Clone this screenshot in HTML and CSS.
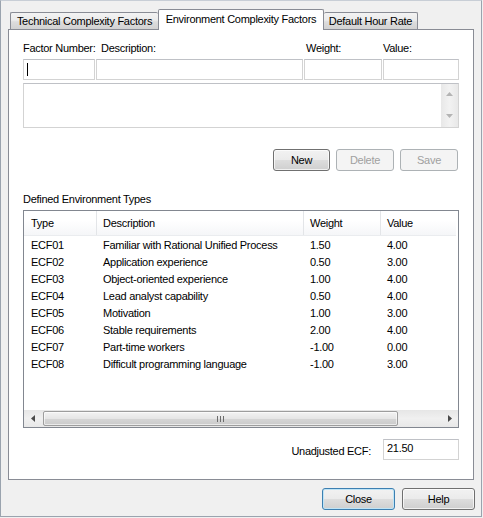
FILE: index.html
```html
<!DOCTYPE html>
<html lang="en">
<head>
    <meta charset="UTF-8">
    <title>Environment Complexity Factors</title>
    <link rel="stylesheet" href="styles.css">
</head>
<body>
    <div class="dialog">
        <!-- 选项卡 -->
        <div class="tabs">
            <div class="tab tab-first">Technical Complexity Factors</div>
            <div class="tab active">Environment Complexity Factors</div>
            <div class="tab tab-last">Default Hour Rate</div>
        </div>

        <div class="panel">
            <!-- 输入区域 -->
            <div class="factor-form">
                <div class="lbl">Factor Number:</div>
                <div class="lbl lbl-desc">Description:</div>
                <div class="lbl lbl-weight">Weight:</div>
                <div class="lbl">Value:</div>
                <div class="field"><span class="caret"></span></div>
                <div class="field"></div>
                <div class="field"></div>
                <div class="field"></div>
            </div>

            <div class="memo">
                <div class="vscroll">
                    <svg width="7" height="4" viewBox="0 0 7 4"><path d="M3.5 0 L7 4 L0 4 Z" fill="#b4b4b4"/></svg>
                    <svg width="7" height="4" viewBox="0 0 7 4"><path d="M0 0 L7 0 L3.5 4 Z" fill="#b4b4b4"/></svg>
                </div>
            </div>

            <div class="actions">
                <button class="btn btn-new">New</button>
                <button class="btn btn-small" disabled>Delete</button>
                <button class="btn btn-small" disabled>Save</button>
            </div>

            <div class="section-title">Defined Environment Types</div>

            <!-- 列表 -->
            <div class="listview">
                <div class="lv-head">
                    <div class="col c-type">Type</div>
                    <div class="col c-desc">Description</div>
                    <div class="col c-weight">Weight</div>
                    <div class="col c-value">Value</div>
                </div>
                <div class="lv-body">
                    <div class="row"><div class="col c-type">ECF01</div><div class="col c-desc">Familiar with Rational Unified Process</div><div class="col c-weight">1.50</div><div class="col c-value">4.00</div></div>
                    <div class="row"><div class="col c-type">ECF02</div><div class="col c-desc">Application experience</div><div class="col c-weight">0.50</div><div class="col c-value">3.00</div></div>
                    <div class="row"><div class="col c-type">ECF03</div><div class="col c-desc">Object-oriented experience</div><div class="col c-weight">1.00</div><div class="col c-value">4.00</div></div>
                    <div class="row"><div class="col c-type">ECF04</div><div class="col c-desc">Lead analyst capability</div><div class="col c-weight">0.50</div><div class="col c-value">4.00</div></div>
                    <div class="row"><div class="col c-type">ECF05</div><div class="col c-desc">Motivation</div><div class="col c-weight">1.00</div><div class="col c-value">3.00</div></div>
                    <div class="row"><div class="col c-type">ECF06</div><div class="col c-desc">Stable requirements</div><div class="col c-weight">2.00</div><div class="col c-value">4.00</div></div>
                    <div class="row"><div class="col c-type">ECF07</div><div class="col c-desc">Part-time workers</div><div class="col c-weight">-1.00</div><div class="col c-value">0.00</div></div>
                    <div class="row"><div class="col c-type">ECF08</div><div class="col c-desc">Difficult programming language</div><div class="col c-weight">-1.00</div><div class="col c-value">3.00</div></div>
                </div>
                <div class="hscroll">
                    <div class="arrow">
                        <svg width="4" height="7" viewBox="0 0 4 7"><path d="M4 0 L4 7 L0 3.5 Z" fill="#4a4a4a"/></svg>
                    </div>
                    <div class="thumb"><span class="grip"></span></div>
                    <div class="track"></div>
                    <div class="arrow">
                        <svg width="4" height="7" viewBox="0 0 4 7"><path d="M0 0 L4 3.5 L0 7 Z" fill="#4a4a4a"/></svg>
                    </div>
                </div>
            </div>

            <div class="total">
                <span class="total-lbl">Unadjusted ECF:</span>
                <div class="field total-field">21.50</div>
            </div>
        </div>

        <!-- 底部按钮 -->
        <div class="footer">
            <button class="btn btn-wide btn-default">Close</button>
            <button class="btn btn-wide">Help</button>
        </div>
    </div>
</body>
</html>
```

FILE: styles.css
```css
/* 全局 */
body {
    margin: 0;
    background: #f0f0f0;
    font-family: 'Liberation Sans', Arial, sans-serif;
    font-size: 11px;
    letter-spacing: -0.28px;
    color: #000;
}

.dialog {
    box-sizing: border-box;
    width: 482px;
    height: 517px;
    border: 1px solid #9aa3ae;
    border-top-color: #c8ced6;
    background: #f0f0f0;
}

/* 选项卡 */
.tabs {
    display: flex;
    align-items: flex-end;
    margin: 8px 0 -1px 9px;
}

.tab {
    box-sizing: border-box;
    height: 17px;
    margin-bottom: 1px;
    border: 1px solid #898c95;
    border-bottom: none;
    border-radius: 2px 2px 0 0;
    background: linear-gradient(#f3f3f3, #ebebeb 45%, #dddddd 55%, #d2d2d2);
    line-height: 16px;
    text-align: center;
    white-space: nowrap;
}

.tab-first {
    width: 148px;
    border-right: none;
}

.tab-last {
    width: 94px;
    border-left: none;
}

.tab.active {
    position: relative;
    width: 166px;
    height: 21px;
    margin-bottom: 0;
    background: #fff;
    line-height: 18px;
}

/* 面板 */
.panel {
    box-sizing: border-box;
    width: 466px;
    height: 451px;
    margin-left: 7px;
    padding: 12px 14px 0;
    border: 1px solid #898c95;
    background: #fff;
}

.factor-form {
    display: grid;
    grid-template-columns: 72px 207px 78px 76px;
    column-gap: 1px;
    row-gap: 4px;
}

.lbl {
    line-height: 13px;
    white-space: nowrap;
}

.lbl-desc {
    padding-left: 5px;
}

.lbl-weight {
    padding-left: 2px;
}

.field {
    box-sizing: border-box;
    height: 21px;
    border: 1px solid #d3d3d3;
    border-top-color: #bfc1c6;
    background: #fff;
}

.caret {
    display: block;
    width: 1px;
    height: 13px;
    margin: 3px 0 0 3px;
    background: #000;
}

.memo {
    box-sizing: border-box;
    height: 45px;
    margin-top: 3px;
    border: 1px solid #d3d3d3;
    border-top-color: #bfc1c6;
    display: flex;
    justify-content: flex-end;
}

.vscroll {
    width: 17px;
    background: linear-gradient(90deg, #e8e8e8, #f2f2f2 50%, #e8e8e8);
    display: flex;
    flex-direction: column;
    justify-content: space-between;
    align-items: center;
    padding: 8px 0 9px;
}

.vscroll svg {
    display: block;
}

/* 按钮 */
.actions {
    display: flex;
    justify-content: flex-end;
    gap: 6px;
    margin: 21px 1px 0 0;
}

.btn {
    box-sizing: border-box;
    height: 22px;
    padding: 0;
    border: 1px solid #707070;
    border-radius: 3px;
    background: linear-gradient(#f2f2f2, #ebebeb 48%, #dddddd 52%, #cfcfcf);
    box-shadow: inset 0 0 0 1px rgba(255, 255, 255, 0.7);
    font-family: inherit;
    font-size: 11px;
    letter-spacing: -0.28px;
    color: #000;
}

.btn-new {
    width: 57px;
}

.btn-small {
    width: 58px;
}

.btn:disabled {
    border-color: #adb2b5;
    background: #f4f4f4;
    box-shadow: none;
    color: #a0a0a0;
}

.section-title {
    margin-top: 22px;
    line-height: 13px;
}

/* 列表 */
.listview {
    box-sizing: border-box;
    height: 218px;
    margin-top: 4px;
    border: 1px solid #828790;
    display: flex;
    flex-direction: column;
}

.lv-head {
    display: flex;
    height: 24px;
    margin-right: 2px;
    background: linear-gradient(#fff, #fff 40%, #f5f6f8);
    border-bottom: 1px solid #eaecef;
}

.lv-head .col {
    line-height: 25px;
    border-right: 1px solid #e3e5e8;
}

.lv-head .c-value {
    border-right: none;
    flex: 1;
}

.col {
    box-sizing: border-box;
    padding-left: 6px;
    white-space: nowrap;
}

.c-type {
    width: 73px;
    padding-left: 7px;
}

.c-desc {
    width: 207px;
}

.c-weight {
    width: 77px;
}

.c-value {
    width: 75px;
}

.lv-body {
    flex: 1;
    padding-top: 1px;
}

.row {
    display: flex;
    height: 17px;
    line-height: 17px;
}

.hscroll {
    display: flex;
    align-items: center;
    height: 17px;
    background: linear-gradient(#e6e6e6, #f0f0f0 50%, #e8e8e8);
}

.arrow {
    width: 17px;
    display: flex;
    justify-content: center;
    align-items: center;
}

.arrow svg {
    display: block;
}

.thumb {
    box-sizing: border-box;
    width: 355px;
    height: 15px;
    margin-left: 2px;
    border: 1px solid #9d9d9d;
    border-radius: 2px;
    background: linear-gradient(#f3f3f3, #e6e6e6 50%, #d5d5d5 52%, #cbcbcb);
    box-shadow: inset 0 0 0 1px rgba(255, 255, 255, 0.6);
    display: flex;
    justify-content: center;
    align-items: center;
}

.grip {
    width: 7px;
    height: 6px;
    background: repeating-linear-gradient(90deg, #6c6c6c 0 1px, transparent 1px 3px);
}

.track {
    flex: 1;
}

/* 合计 */
.total {
    display: flex;
    justify-content: flex-end;
    margin-top: 11px;
}

.total-lbl {
    margin: 6px 12px 0 0;
    line-height: 13px;
}

.total-field {
    width: 76px;
    padding: 2px 3px;
    line-height: 13px;
}

/* 底部 */
.footer {
    display: flex;
    justify-content: flex-end;
    gap: 7px;
    margin: 8px 6px 0 0;
}

.btn-wide {
    width: 73px;
}

.btn-default {
    border-color: #3c7fb1;
    box-shadow: inset 0 0 0 1px #bfe4f6;
}
```
